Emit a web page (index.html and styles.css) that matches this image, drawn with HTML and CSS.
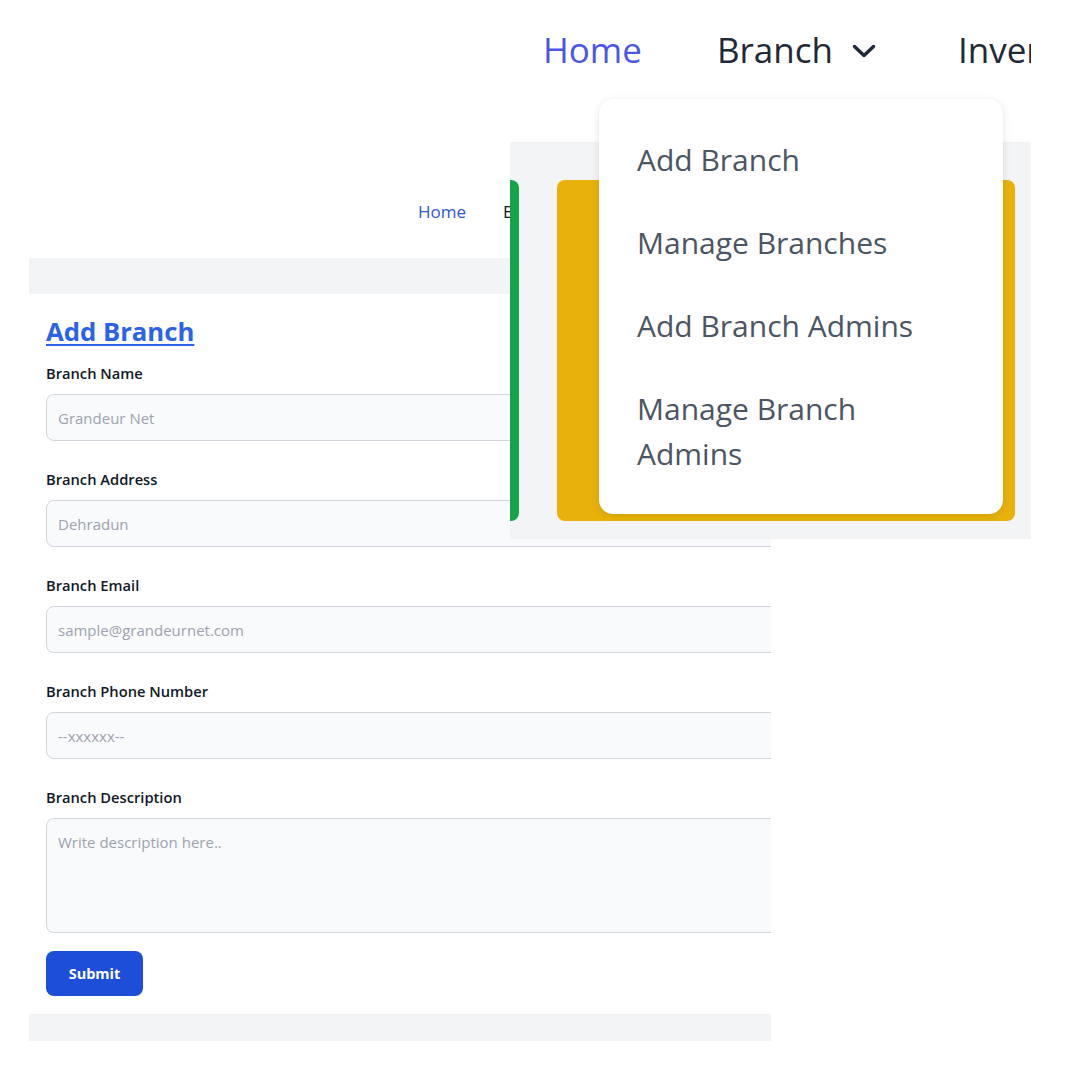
FILE: index.html
```html
<!DOCTYPE html>
<html lang="en">
<head>
<meta charset="utf-8">
<title>Add Branch</title>
<link rel="stylesheet" href="styles.css">
</head>
<body>
<div class="canvas">
  <section class="form-shot">
    <div class="crumbs">
      <a class="crumb crumb-home" href="#">Home</a>
      <span class="crumb">Branch</span>
    </div>
    <div class="strip strip-top"></div>
    <div class="panel">
      <h1 class="title"><a href="#">Add Branch</a></h1>
      <div class="field">
        <label class="label">Branch Name</label>
        <input class="input" type="text" placeholder="Grandeur Net">
      </div>
      <div class="field">
        <label class="label">Branch Address</label>
        <input class="input" type="text" placeholder="Dehradun">
      </div>
      <div class="field">
        <label class="label">Branch Email</label>
        <input class="input" type="text" placeholder="sample@grandeurnet.com">
      </div>
      <div class="field">
        <label class="label">Branch Phone Number</label>
        <input class="input" type="text" placeholder="--xxxxxx--">
      </div>
      <div class="field field-last">
        <label class="label">Branch Description</label>
        <textarea class="textarea" placeholder="Write description here.."></textarea>
      </div>
      <button class="submit" type="button">Submit</button>
    </div>
    <div class="strip strip-bottom"></div>
  </section>

  <section class="inset">
    <nav class="nav">
      <a class="nav-item nav-home" href="#">Home</a>
      <span class="nav-item nav-branch">Branch</span>
      <svg class="chev" viewBox="0 0 24 14" width="24" height="14" aria-hidden="true"><path d="M2.5 2.5 L12 11.5 L21.5 2.5" fill="none" stroke="#1f2937" stroke-width="3.4" stroke-linecap="round" stroke-linejoin="round"/></svg>
      <span class="nav-item nav-inv">Inventory</span>
    </nav>
    <div class="dash">
      <div class="card card-green"></div>
      <div class="card card-yellow"></div>
    </div>
    <div class="dropdown">
      <a class="dd-item" href="#">Add Branch</a>
      <a class="dd-item" href="#">Manage Branches</a>
      <a class="dd-item" href="#">Add Branch Admins</a>
      <a class="dd-item" href="#">Manage Branch Admins</a>
    </div>
  </section>
</div>
</body>
</html>
```
FILE: styles.css
```css
* { box-sizing: border-box; }

html, body {
  margin: 0;
  padding: 0;
  background: #ffffff;
}

body {
  font-family: "Open Sans", "Noto Sans", "Liberation Sans", sans-serif;
  color: #111827;
}

.canvas {
  position: relative;
  width: 1080px;
  height: 1080px;
  overflow: hidden;
  background: #ffffff;
}

/* ---------- form screenshot ---------- */
.form-shot {
  margin-left: 29px;
  padding-top: 180px;
  width: 742px;
  overflow: hidden;
}

.crumbs {
  height: 78px;
  padding-left: 389px;
  padding-top: 20px;
  display: flex;
  gap: 37px;
  font-size: 17px;
  line-height: 24px;
}

.crumb {
  color: #111827;
  text-decoration: none;
}

.crumb-home {
  color: #2f55d4;
}

.strip {
  background: #f3f4f6;
}

.strip-top { height: 36px; }
.strip-bottom { height: 27px; }

.panel {
  background: #ffffff;
  padding: 22px 0 18px 17px;
}

.title {
  margin: 0 0 15px 0;
  font-size: 25.7px;
  line-height: 32px;
  font-weight: 700;
}

.title a {
  color: #2b62e6;
  text-decoration: underline;
  text-decoration-thickness: 2px;
  text-underline-offset: 3px;
}

.field {
  margin-bottom: 28px;
}

.field-last {
  margin-bottom: 18px;
}

.label {
  display: block;
  font-size: 14.7px;
  line-height: 20px;
  font-weight: 600;
  color: #111827;
  margin-bottom: 11px;
}

.input,
.textarea {
  display: block;
  width: 1000px;
  border: 1px solid #d1d5db;
  border-radius: 8px;
  background: #f9fafb;
  font-family: inherit;
  font-size: 15px;
  color: #111827;
  padding: 0 11px;
  outline: none;
}

.input {
  height: 47px;
}

.textarea {
  height: 115px;
  padding-top: 11px;
  line-height: 24px;
  resize: none;
}

.input::placeholder,
.textarea::placeholder {
  color: #9ca3af;
  opacity: 1;
}

.submit {
  display: block;
  width: 97px;
  height: 45px;
  border: 0;
  border-radius: 8px;
  background: #1d4ed8;
  color: #ffffff;
  font-family: inherit;
  font-size: 14.5px;
  font-weight: 700;
  padding: 0;
}

/* ---------- zoomed inset ---------- */
.inset {
  position: absolute;
  left: 510px;
  top: 0;
  width: 521px;
  height: 539px;
  overflow: hidden;
  background: #ffffff;
}

.nav {
  height: 142px;
  display: flex;
  align-items: flex-start;
  padding-left: 33px;
  padding-top: 26px;
  white-space: nowrap;
}

.nav-item {
  font-size: 35px;
  line-height: 48px;
  font-weight: 500;
  color: #1f2937;
  text-decoration: none;
}

.nav-home {
  color: #4a58e3;
}

.nav-branch {
  margin-left: 75px;
}

.chev {
  margin-left: 19px;
  margin-top: 18px;
  flex: none;
}

.nav-inv {
  margin-left: 82px;
}

.dash {
  height: 397px;
  background: #f3f4f6;
  display: flex;
  align-items: flex-start;
  padding-top: 38px;
}

.card {
  height: 341px;
  flex: none;
}

.card-green {
  width: 9px;
  background: #16a34a;
  border-radius: 0 8px 8px 0;
  margin-right: 38px;
}

.card-yellow {
  width: 458px;
  background: #e8b20a;
  border-radius: 8px;
}

.dropdown {
  position: absolute;
  left: 89px;
  top: 99px;
  width: 404px;
  padding: 19px 0 19px 38px;
  background: #ffffff;
  border-radius: 14px;
  box-shadow: 0 2px 8px rgba(0, 0, 0, 0.10), 0 0 1px rgba(0, 0, 0, 0.08);
}

.dd-item {
  display: block;
  max-width: 290px;
  padding: 19px 0;
  font-size: 30px;
  line-height: 45px;
  color: #4b5563;
  text-decoration: none;
}
```
